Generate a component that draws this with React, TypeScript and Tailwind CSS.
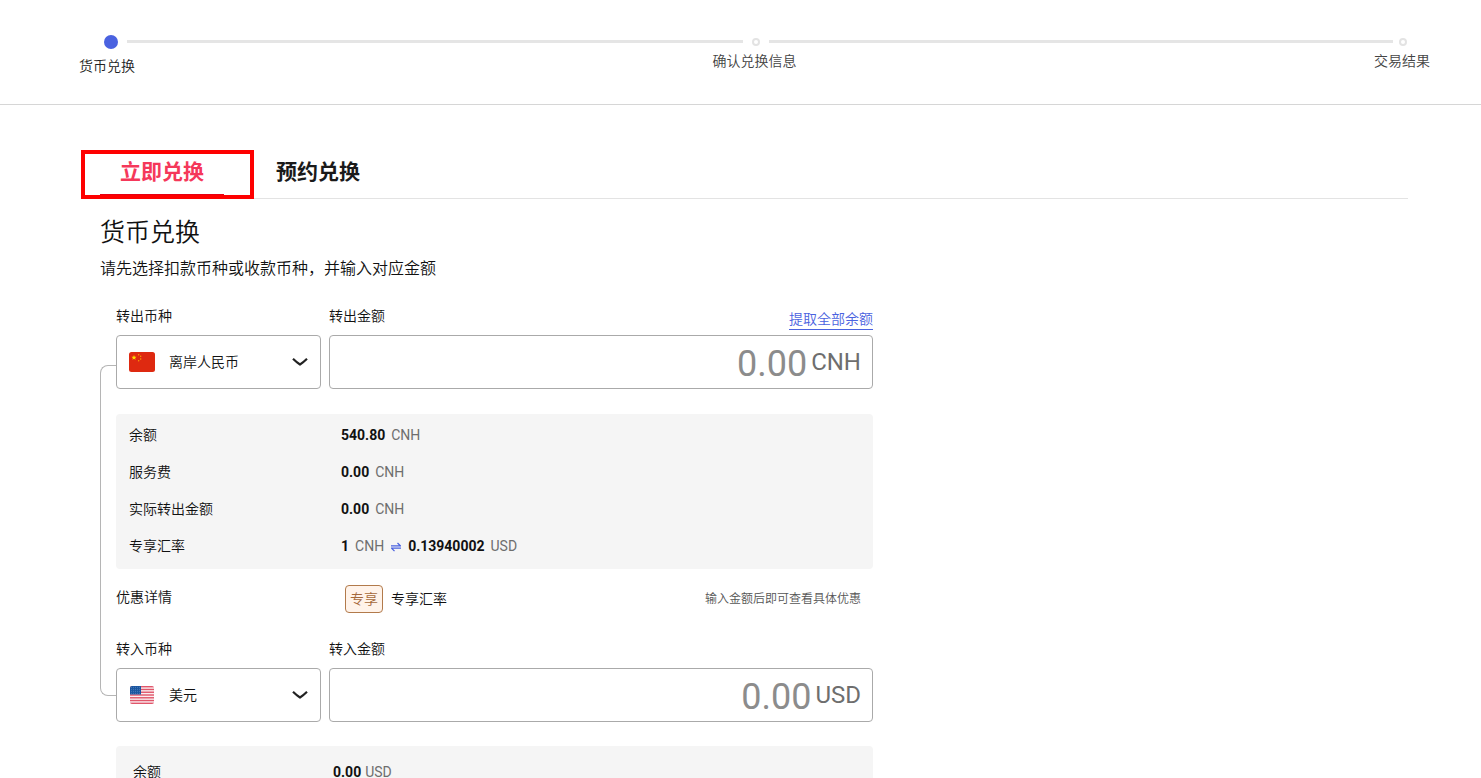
import { useState } from "react";
import type { ReactNode } from "react";

function ChinaFlag() {
  return (
    <svg viewBox="0 0 26 20" className="h-5 w-[26px]" aria-hidden="true">
      <rect width="26" height="20" rx="2.5" fill="#de2910" />
      <path d="M5 3l.7 1.7 1.8.1-1.4 1.2.5 1.8L5 6.800l-1.600 1 .5-1.800L2.500 4.800l1.800-.1z" fill="#ffde00" />
      <g fill="#f7a800">
        <circle cx="9.700" cy="2.700" r=".7" />
        <circle cx="11.700" cy="4.300" r=".7" />
        <circle cx="11.700" cy="7" r=".7" />
        <circle cx="9.700" cy="8.800" r=".7" />
      </g>
    </svg>
  );
}

function UsFlag() {
  const stripes = [0, 1, 2, 3, 4, 5, 6];
  const dots = [0, 1, 2, 3, 4];
  return (
    <svg viewBox="0 0 26 20" className="h-5 w-[26px]" aria-hidden="true">
      <clipPath id="us">
        <rect x="1" y="1" width="24" height="18" rx="2" />
      </clipPath>
      <g clipPath="url(#us)">
        <rect x="1" y="1" width="24" height="18" fill="#fbeef0" />
        {stripes.map((i) => (
          <rect key={i} x="1" y={1 + i * 2.77} width="24" height="1.4" fill="#e0566a" />
        ))}
        <rect x="1" y="1" width="11" height="8.500" fill="#1a56a0" />
        {dots.map((c) =>
          [0, 1, 2, 3].map((r) => (
            <circle key={`${c}-${r}`} cx={2.3 + c * 2.1} cy={2.2 + r * 2} r=".35" fill="#a9c4e4" />
          )),
        )}
      </g>
    </svg>
  );
}

function Swap() {
  return (
    <svg viewBox="0 0 10 10" className="mx-[7px] inline-block size-[10px]" fill="none" stroke="#4a62e0" strokeWidth="1.300" aria-hidden="true">
      <path d="M0 3.900h9.500L6.500 1M10 6.200H.5l3 2.900" />
    </svg>
  );
}

function Stepper() {
  return (
    <header className="h-[105px] border-b border-[#d6d6d6] pt-[34px]">
      <div className="flex h-[15px] items-center pl-[104px] pr-[74px]">
        <span className="size-[14px] shrink-0 rounded-full bg-[#4a62e0]" />
        <div className="flex-1">
          <div className="mx-[9px] h-[3px] bg-[#e5e5e5]" />
        </div>
        <span className="size-2 shrink-0 rounded-full border-2 border-[#e3e3e3]" />
        <div className="flex-1">
          <div className="ml-[9px] h-[3px] bg-[#e5e5e5]" />
        </div>
        <span className="flex w-[14px] shrink-0 justify-end">
          <span className="size-2 rounded-full border-2 border-[#e3e3e3]" />
        </span>
      </div>
      <ol className="flex items-start justify-between pl-[79px] pr-[51px] text-sm leading-6 text-[#444]">
        <li className="pt-[5px] text-[#222]">货币兑换</li>
        <li>确认兑换信息</li>
        <li>交易结果</li>
      </ol>
    </header>
  );
}

function CurrencySelect({ id, label, options, flag }: { id: string; label: string; options: string[]; flag: ReactNode }) {
  return (
    <div className="w-[205px] shrink-0">
      <label htmlFor={id} className="block h-[31px] leading-6">
        {label}
      </label>
      <div className="relative">
        <select id={id} className="h-[54px] w-full appearance-none rounded border border-[#aaa] bg-white pl-[52px] pr-9 text-sm text-[#111]">
          {options.map((o) => (
            <option key={o}>{o}</option>
          ))}
        </select>
        <span className="pointer-events-none absolute inset-y-0 left-[13px] flex items-center">{flag}</span>
        <span className="pointer-events-none absolute inset-y-0 right-3 flex items-center">
          <svg viewBox="0 0 18 10" className="h-[10px] w-[18px]" fill="none" stroke="#222" strokeWidth="2.200" aria-hidden="true">
            <path d="M2 1.700C4.600 4.200 6.500 6 9 7.500 11.500 6 13.400 4.200 16 1.700" />
          </svg>
        </span>
      </div>
    </div>
  );
}

function AmountInput({ id, label, unit, action }: { id: string; label: string; unit: string; action?: ReactNode }) {
  const [value, setValue] = useState("");
  return (
    <div className="min-w-0 flex-1">
      <div className="flex h-[31px] items-start justify-between">
        <label htmlFor={id} className="leading-6">
          {label}
        </label>
        {action}
      </div>
      <div className="flex h-[54px] items-center rounded border border-[#aaa] pl-3 pr-[11px] font-normal">
        <input
          id={id}
          value={value}
          onChange={(e) => setValue(e.target.value)}
          placeholder="0.00"
          inputMode="decimal"
          className="h-full min-w-0 flex-1 bg-transparent pt-1 text-right text-4xl text-[#222] outline-none placeholder:text-[#8c8c8c]"
        />
        <span className="pl-1 text-2xl text-[#6e6e6e]">{unit}</span>
      </div>
    </div>
  );
}

function Row({ label, children }: { label: string; children: ReactNode }) {
  return (
    <div className="flex leading-[37px]">
      <dt className="w-[212px] shrink-0">{label}</dt>
      <dd className="whitespace-nowrap">{children}</dd>
    </div>
  );
}

function Money({ value, unit }: { value: string; unit: string }) {
  return (
    <>
      <strong className="font-bold">{value}</strong>
      <span className="ml-[6px] font-normal text-[#6e6e6e]">{unit}</span>
    </>
  );
}

export default function App() {
  return (
    <div className="bg-white font-['Roboto','Noto_Sans_CJK_SC',sans-serif] text-sm font-[350] text-[#111]">
      <Stepper />
      <main className="pl-[100px] pr-[73px] pt-[45px]">
        <div role="tablist" className="relative flex h-[49px] border-b border-[#e3e3e3] text-[21px] font-bold">
          <button role="tab" aria-selected="true" className="border-b-4 border-[#e60012] px-[20px] text-[#f5385a]">
            立即兑换
          </button>
          <button role="tab" aria-selected="false" className="ml-8 border-b-4 border-transparent px-[20px] text-[#1a1a1a]">
            预约兑换
          </button>
          <span className="pointer-events-none absolute -left-[19px] top-0 h-[49px] w-[173px] border-4 border-[#fe0000]" />
        </div>

        <h1 className="mt-4 text-[25px] leading-9">货币兑换</h1>
        <p className="mt-[6px] text-base leading-6">请先选择扣款币种或收款币种，并输入对应金额</p>

        <form className="relative mt-[23px] max-w-[773px] pl-4">
          <span className="absolute left-0 top-[61px] h-[331px] w-4 rounded-l-lg border border-r-0 border-[#b5b5b5]" />
          <div className="flex gap-2">
            <CurrencySelect id="out-currency" label="转出币种" options={["离岸人民币", "美元"]} flag={<ChinaFlag />} />
            <AmountInput
              id="out-amount"
              label="转出金额"
              unit="CNH"
              action={
                <a href="#all" className="mt-[5px] border-b border-[#4a62e0] leading-5 text-[#4a62e0]">
                  提取全部余额
                </a>
              }
            />
          </div>

          <dl className="mt-[25px] rounded bg-[#f5f5f5] px-[13px] pb-1 pt-[3px]">
            <Row label="余额">
              <Money value="540.80" unit="CNH" />
            </Row>
            <Row label="服务费">
              <Money value="0.00" unit="CNH" />
            </Row>
            <Row label="实际转出金额">
              <Money value="0.00" unit="CNH" />
            </Row>
            <Row label="专享汇率">
              <Money value="1" unit="CNH" />
              <Swap />
              <Money value="0.13940002" unit="USD" />
            </Row>
          </dl>

          <div className="mt-4 flex h-7 items-center">
            <span className="w-[229px] shrink-0 self-start leading-6">优惠详情</span>
            <span className="rounded border border-[#b27a4b] bg-[#fff3ea] px-1 leading-[26px] text-[#a5683a]">专享</span>
            <span className="ml-2">专享汇率</span>
            <span className="ml-auto pr-3 text-xs text-[#555]">输入金额后即可查看具体优惠</span>
          </div>

          <div className="mt-6 flex gap-2">
            <CurrencySelect id="in-currency" label="转入币种" options={["美元", "离岸人民币"]} flag={<UsFlag />} />
            <AmountInput id="in-amount" label="转入金额" unit="USD" />
          </div>

          <dl className="mt-6 rounded bg-[#f5f5f5] px-[17px] py-2">
            <div className="flex leading-[37px]">
              <dt className="w-[200px] shrink-0">余额</dt>
              <dd>
                <strong className="font-bold">0.00</strong>
                <span className="ml-1 font-normal text-[#6e6e6e]">USD</span>
              </dd>
            </div>
          </dl>
        </form>
      </main>
    </div>
  );
}
